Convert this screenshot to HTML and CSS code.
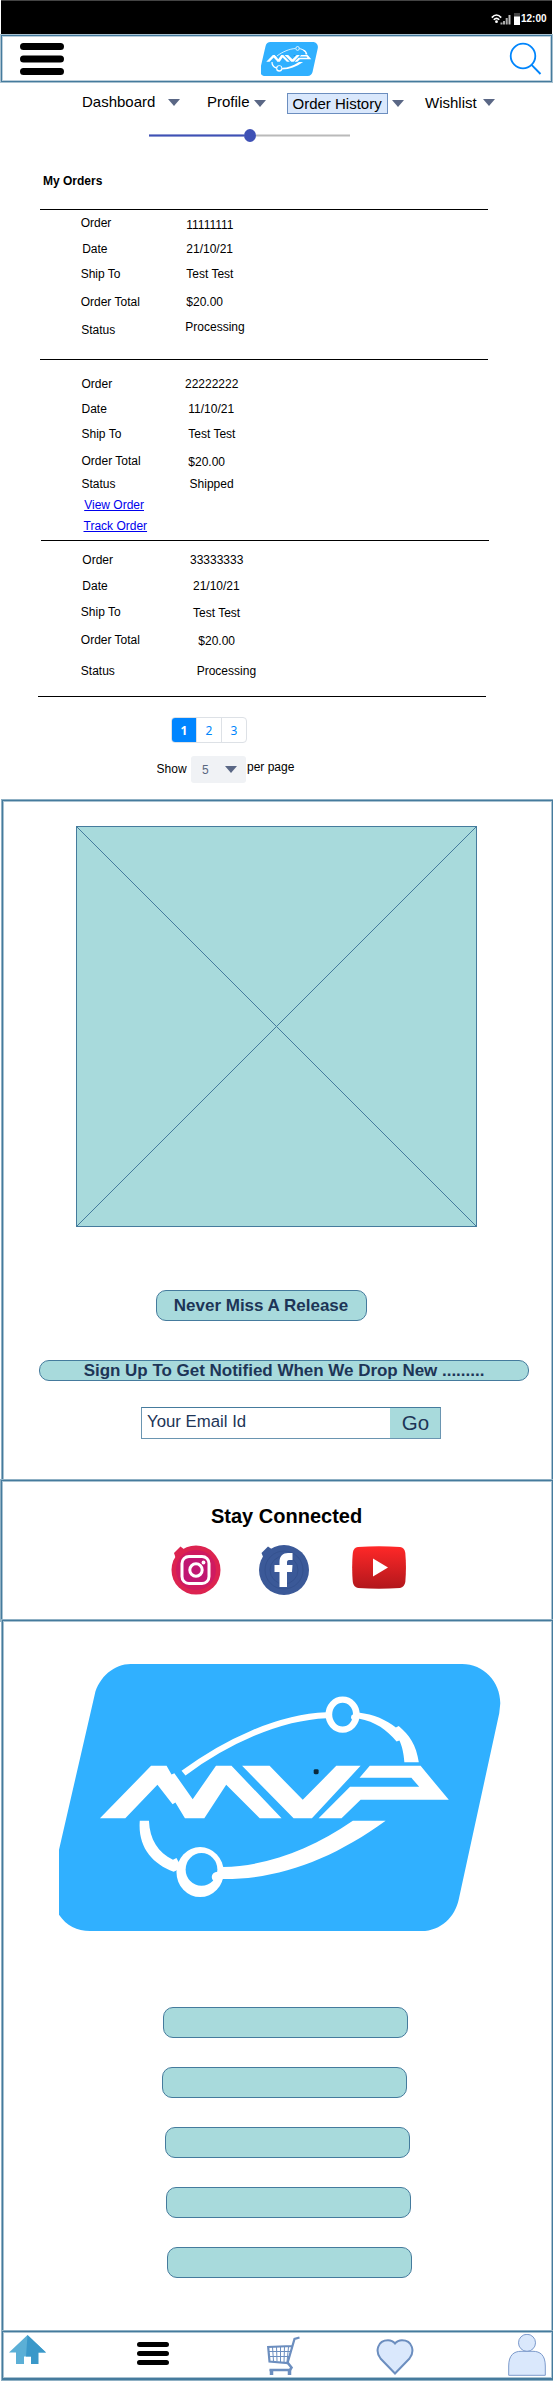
FILE: index.html
```html
<!DOCTYPE html>
<html lang="en">
<head>
<meta charset="utf-8">
<title>My Orders</title>
<link rel="stylesheet" href="styles.css">
</head>
<body>
<svg class="defs" width="0" height="0">
  <symbol id="mvp" viewBox="167 102 1253 802" preserveAspectRatio="none">
    <path fill="#30b0ff" d="M370 102H1310C1370 102 1418 155 1418 220L1415 250L1300 810C1290 860 1250 904 1195 904H255C218 904 188 888 167 855V660L268 195C280 140 325 102 370 102Z"/>
    <path fill="#fff" d="M283 565L428 408H472L486 434L494 430L546 508L612 408H656L798 565H736L641 465L579 565H524L497 518L489 523L446 465L355 565ZM686 408H764L858 510L953 408H1022L884 565H832ZM1048 408H1192L1272 510H1022L968 565H903L992 471H1188L1166 444H1019Z"/>
    <path fill="none" stroke="#fff" stroke-width="18" d="M520 430C640 335 790 262 925 256"/>
    <path fill="#fff" d="M1016 248C1060 254 1095 270 1122 293L1130 288C1160 315 1180 345 1187 397H1146C1144 370 1140 350 1132 332L1124 335C1096 300 1065 276 1016 266ZM396 573H422C424 630 448 668 490 690L500 685L515 715L492 726C430 702 390 650 396 573ZM632 712C760 708 880 660 1000 573H1093C940 690 790 750 628 748Z"/>
    <ellipse cx="971" cy="254" rx="39" ry="45" fill="#30b0ff" stroke="#fff" stroke-width="19"/>
    <ellipse cx="567" cy="727" rx="67" ry="75" fill="#fff"/>
    <ellipse cx="571" cy="719" rx="45" ry="49" fill="#30b0ff"/>
    <circle cx="1004" cy="262" r="9" fill="#fff"/><circle cx="616" cy="742" r="16" fill="#fff"/>
    <rect x="889" y="418" width="14" height="15" rx="4" fill="#0b2a3d"/>
  </symbol>
  <symbol id="bars" viewBox="0 0 44 32" preserveAspectRatio="none">
    <path d="M3.5 3.5H40.5M3.5 16H40.5M3.5 28.5H40.5" stroke="#000" stroke-width="7" stroke-linecap="round"/>
  </symbol>
  <symbol id="caret" viewBox="0 0 12 7"><path d="M0 0H12L6 7Z" fill="#5a6785"/></symbol>
</svg>

<div class="status">
  <svg class="status-icons" viewBox="0 0 30 13">
    <path d="M.8 4.600Q5.500-.6 10.200 4.600M2.800 6.800Q5.500 3.800 8.200 6.800" fill="none" stroke="#fff" stroke-width="1.700"/>
    <circle cx="5.500" cy="8.700" r="1.400" fill="#fff"/>
    <path d="M9.500 11.500V9.500h2v2zM12 11.500V8h2v3.500zM14.700 11.500V5h2v6.500z" fill="#aaa"/><path d="M17.500 11.500V2h2v9.500z" fill="#bbb"/>
    <path d="M23 0h6v4h-6z" fill="#444"/><path d="M23 3.500h6v8.500h-6z" fill="#fff"/>
  </svg><span>12:00</span>
</div>
<header class="header">
  <svg class="menu"><use href="#bars"/></svg>
  <svg class="logo"><use href="#mvp"/></svg>
  <svg class="search" viewBox="0 0 33 33"><circle cx="14" cy="14" r="12.300" fill="none" stroke="#0085fc" stroke-width="1.800"/><path d="M22.600 22.800L31.500 32" stroke="#0085fc" stroke-width="1.900"/></svg>
</header>
<nav class="tabs">
  <span class="t1">Dashboard</span><svg class="caret c1"><use href="#caret"/></svg>
  <span class="t2">Profile</span><svg class="caret c2"><use href="#caret"/></svg>
  <span class="t3">Order History</span><svg class="caret c3"><use href="#caret"/></svg>
  <span class="t4">Wishlist</span><svg class="caret c4"><use href="#caret"/></svg>
</nav>
<div class="slider"><i class="fill"></i><i class="knob"></i><i class="rest"></i></div>

<main class="orders">
  <h1>My Orders</h1>
  <section class="order o1">
    <div class="labels"><p>Order</p><p>Date</p><p>Ship To</p><p>Order Total</p><p>Status</p></div>
    <div class="values"><p>11111111</p><p>21/10/21</p><p>Test Test</p><p>$20.00</p><p>Processing</p></div>
  </section>
  <section class="order o2">
    <div class="labels"><p>Order</p><p>Date</p><p>Ship To</p><p>Order Total</p><p>Status</p><p><a href="#">View Order</a></p><p><a href="#">Track Order</a></p></div>
    <div class="values"><p>22222222</p><p>11/10/21</p><p>Test Test</p><p>$20.00</p><p>Shipped</p></div>
  </section>
  <section class="order o3">
    <div class="labels"><p>Order</p><p>Date</p><p>Ship To</p><p>Order Total</p><p>Status</p></div>
    <div class="values"><p>33333333</p><p>21/10/21</p><p>Test Test</p><p>$20.00</p><p>Processing</p></div>
  </section>
  <div class="end"></div>
  <div class="pages"><b>1</b><span>2</span><span>3</span></div>
  <div class="perpage"><span class="show">Show</span><div class="select"><span>5</span><svg class="caret"><use href="#caret"/></svg></div><span class="pp">per page</span></div>
</main>

<section class="panel signup">
  <svg class="placeholder" viewBox="0 0 401 401"><rect x=".5" y=".5" width="400" height="400"/><path d="M.5 .5L400.500 400.500M400.500 .5L.5 400.500"/></svg>
  <div class="pill release">Never Miss A Release</div>
  <div class="pill notify">Sign Up To Get Notified When We Drop New .........</div>
  <div class="email"><span>Your Email Id</span><b>Go</b></div>
</section>
<section class="panel social">
  <h2>Stay Connected</h2>
  <div class="icons">
    <svg class="ig" viewBox="0 0 50 50">
      <path fill="#dc2350" d="M3 8L9.500 1.500L14 5L5 14Z"/><circle cx="25" cy="25" r="24.500" fill="#dc2350"/><circle cx="25" cy="25" r="20" fill="#cf1a60"/>
      <rect x="11" y="11.500" width="27" height="27" rx="7" fill="#c01672" stroke="#fff" stroke-width="3"/><circle cx="25" cy="25" r="6.200" fill="none" stroke="#fff" stroke-width="3"/><circle cx="32.500" cy="17.500" r="1.900" fill="#fff"/>
    </svg>
    <svg class="fb" viewBox="0 0 50 50">
      <path fill="#3b5998" d="M2.500 8L9 1.500L14 5L5 14Z"/><circle cx="25" cy="25" r="25" fill="#3b5998"/>
      <circle cx="25" cy="25" r="19" fill="none" stroke="#324f8c" stroke-width=".8"/><circle cx="25" cy="25" r="14" fill="none" stroke="#324f8c" stroke-width=".8"/>
      <path fill="#fff" d="M20.500 42V27H15.500V20H20.500V17C20.500 11 24 8 29 8H33.500V15H30C28.500 15 28 16 28 17.500V20H33.500L33 27H28V42Z"/>
    </svg>
    <svg class="yt" viewBox="0 0 54 43">
      <defs><linearGradient id="red" x2="0" y2="1"><stop stop-color="#ff2828"/><stop offset="1" stop-color="#b2171c"/></linearGradient></defs>
      <path fill="url(#red)" d="M6 1Q27-.5 48 1Q52.500 1.500 53.300 7Q54.600 21 53.300 36Q52.500 41 48 42Q27 43.500 6 42Q1.500 41 .8 36Q-.5 21 .8 7Q1.500 1.500 6 1Z"/><path fill="#fff" d="M21 12.500L36 21.500L21 30.500Z"/>
    </svg>
  </div>
</section>
<section class="panel footer">
  <svg class="biglogo"><use href="#mvp"/></svg>
  <div class="link l1"></div><div class="link l2"></div><div class="link l3"></div><div class="link l4"></div><div class="link l5"></div>
</section>
<nav class="bottom">
  <svg class="home" viewBox="0 0 37 29"><path fill="#5bafd6" d="M18.500 0L0 17.500H7V29H15V21.500H22V29H29V17.500H37Z"/><path fill="#3a98c9" d="M18.500 0L17 21.500H22V29H29.500V17.500H37Z"/></svg>
  <svg class="menu2"><use href="#bars"/></svg>
  <svg class="cart" viewBox="0 0 33 40" fill="none" stroke="#6c8ebf">
    <path stroke-width="1" d="M5.500 11L6.500 25M9.500 11L10 25M13.500 11V26M17.500 11L17 26M21.500 11L20 26M2 15.500H24M2 20.500H23"/>
    <path stroke-width="2.200" d="M32.500 1.500L27.500 3L20.500 27L2.500 25.500L1.200 11L25 10"/><path stroke-width="2.600" d="M20.500 26.500L24.500 31.500L23 34H2.500"/><path stroke-width="3.500" d="M4.500 33.500V39M22.500 33.500V39"/>
  </svg>
  <svg class="heart" viewBox="0 0 38 36"><path d="M19 34.500L4.500 19.500C-1 12.500 1.500 1.200 12 1.200Q16.500 1.200 19 4.500Q21.500 1.200 26 1.200C36.500 1.200 39 12.500 33.500 19.500Z" fill="#dae8fc" stroke="#6c8ebf" stroke-width="2"/></svg>
  <svg class="person" viewBox="0 0 38 42" fill="#dae8fc" stroke="#7c9acb"><path d="M.7 41.300V32C.7 21 6 17.300 13 17.300H25C32 17.300 37.300 21 37.300 32V41.300Z"/><circle cx="19" cy="8.800" r="8.500"/></svg>
</nav>
</body>
</html>
```
FILE: styles.css
```css
* { box-sizing: border-box; margin: 0; padding: 0; }
body { width: 553px; height: 2382px; overflow: hidden; background: #fff; font: 12px/14px "Liberation Sans", Arial, sans-serif; color: #000; display: flex; flex-direction: column; }
svg { display: block; flex: none; }
.defs { position: absolute; }
.status { height: 35px; margin: 0 1px; background: #000; border-top: 1px solid #444; color: #fff; font-size: 10px; font-weight: bold; display: flex; padding-left: 490px; align-items: flex-start; }
.status-icons { width: 30px; height: 13px; margin-top: 12px; }
.status span { margin: 11px 0 0 0; line-height: 13px; }
.header { height: 47px; margin: 0 1px; border: 1px solid #457b9d; box-shadow: 0 0 0 1px #a8c1d0, inset 0 0 0 1px #bccfdb; display: flex; align-items: flex-start; }
.menu { width: 44px; height: 32px; margin: 7px 0 0 18px; }
.logo { width: 57px; height: 34px; margin: 6px 0 0 197px; }
.search { width: 33px; height: 33px; margin: 6px 0 0 191px; }
.tabs { height: 32px; display: flex; align-items: flex-start; font-size: 15px; line-height: 18px; white-space: nowrap; }
.tabs span { flex: none; }
.caret { width: 12px; height: 7px; }
.t1 { width: 86px; margin: 11px 0 0 82px; }
.c1 { margin-top: 17px; }
.t2 { width: 47px; margin: 11px 0 0 27px; }
.c2 { margin-top: 18px; }
.t3 { width: 101px; height: 21px; margin: 11px 0 0 21px; padding-left: 4.500px; line-height: 20px; background: #dae8fc; border: 1px solid #6c8ebf; }
.c3 { margin: 18px 0 0 4px; }
.t4 { width: 58px; margin: 12px 0 0 21px; }
.c4 { margin: 17px 0 0 0; }
.slider { height: 13px; margin: 15px 0 0 149px; width: 201px; display: flex; align-items: center; }
.fill { width: 95px; height: 3px; background: #3f51b5; border: solid #8e99d2; border-width: 1px 0; }
.knob { width: 12px; height: 13px; border-radius: 50%; background: #3f51b5; }
.rest { width: 94px; height: 3px; background: #bababa; border: solid #dcdcdc; border-width: 1px 0; }
.orders { height: 658px; }
h1 { font-size: 12px; line-height: 14px; margin: 32px 0 21px 43px; }
.order { display: flex; margin-left: 40px; width: 448px; border-top: 1px solid #000; }
.order p { height: 14px; white-space: nowrap; }
.labels { width: 145px; }
.o1 { height: 150px; }
.o1 .labels { padding: 6px 0 0 40.700px; }
.o1 .labels p:nth-child(2) { margin: 12px 0 0 1.500px; }
.o1 .labels p:nth-child(3) { margin-top: 11px; }
.o1 .labels p:nth-child(4) { margin-top: 14px; }
.o1 .labels p:nth-child(5) { margin: 14px 0 0 .5px; }
.o1 .values { padding: 8px 0 0 1.300px; }
.o1 .values p:nth-child(2) { margin-top: 10px; }
.o1 .values p:nth-child(3) { margin-top: 11px; }
.o1 .values p:nth-child(4) { margin-top: 14px; }
.o1 .values p:nth-child(5) { margin: 11px 0 0 -1px; }
.o2 { height: 181px; }
.o2 .labels { padding: 17px 0 0 41.500px; }
.o2 p:nth-child(2), .o2 p:nth-child(3) { margin-top: 11px; }
.o2 .labels p:nth-child(4) { margin-top: 13px; }
.o2 .labels p:nth-child(5) { margin-top: 9px; }
.o2 .labels p:nth-child(6) { margin: 7px 0 0 2.700px; }
.o2 .labels p:nth-child(7) { margin: 7px 0 0 2px; }
.o2 .values { padding: 17px 0 0 0; }
.o2 .values p:nth-child(n+2) { margin-left: 3.300px; }
.o2 .values p:nth-child(4) { margin-top: 14px; }
.o2 .values p:nth-child(5) { margin: 8px 0 0 4.600px; }
a { color: #0000ee; }
.o3 { margin-left: 41px; height: 156px; }
.o3 .labels { padding: 12px 0 0 41.300px; }
.o3 .labels p:nth-child(2) { margin-top: 12px; }
.o3 .labels p:nth-child(3) { margin: 12px 0 0 -1.500px; }
.o3 .labels p:nth-child(4) { margin: 14px 0 0 -1.500px; }
.o3 .labels p:nth-child(5) { margin: 17px 0 0 -1.500px; }
.o3 .values { padding: 12px 0 0 4px; }
.o3 .values p:nth-child(2) { margin: 12px 0 0 3px; }
.o3 .values p:nth-child(3) { margin: 13px 0 0 3px; }
.o3 .values p:nth-child(4) { margin: 14px 0 0 8.300px; }
.o3 .values p:nth-child(5) { margin: 16px 0 0 6.700px; }
.end { width: 448px; height: 1px; margin-left: 38px; background: #000; }
.pages { display: flex; width: 76px; height: 26px; margin: 20px 0 0 171px; border: 1px solid #dde1e6; border-radius: 4px; overflow: hidden; color: #0085fc; font: 12px/25px "Noto Sans", "Open Sans", sans-serif; text-align: center; }
.pages b { width: 24px; background: #0085ff; color: #fff; }
.pages span { width: 25px; border-left: 1px solid #dde1e6; }
.perpage { display: flex; margin: 13px 0 0 156px; height: 27px; align-items: flex-start; }
.show { width: 35px; margin-top: 6px; padding-left: .6px; }
.select { width: 55px; height: 27px; border-radius: 3px; background: #f0f2f5; color: #596780; display: flex; padding-left: 11px; }
.select span { width: 23px; margin-top: 7px; }
.select .caret { margin-top: 10px; }
.pp { margin: 4px 0 0 1px; }
.panel { width: 551px; margin-left: 2px; border: 1px solid #457b9d; box-shadow: 0 0 0 1px #8fb0c4, inset 0 0 0 1px #a9c2d1; display: flex; flex-direction: column; flex: none; color: #1d3557; }
.signup { height: 681px; }
.placeholder { width: 401px; height: 401px; margin: 25px 0 0 73px; fill: #a8dadc; stroke: #457b9d; stroke-width: 1; }
.pill { background: #a8dadc; border: 1px solid #457b9d; border-radius: 10px; font-weight: bold; font-size: 17px; text-align: center; white-space: nowrap; }
.release { width: 211px; height: 31px; margin: 63px 0 0 153px; line-height: 29px; padding-right: 1px; }
.notify { width: 490px; height: 21px; margin: 39px 0 0 36px; line-height: 19px; letter-spacing: -.02px; }
.email { width: 300px; height: 32px; margin: 26px 0 0 138px; border: 1px solid #6a95b1; border-top-color: #457b9d; display: flex; }
.email span { flex: 1; font-size: 16.800px; line-height: 27px; padding-left: 5px; }
.email b { width: 50px; background: #a8dadc; font-weight: normal; font-size: 20.500px; line-height: 30px; text-align: center; padding-left: 1px; }
.social { height: 141px; margin: -1px 0 0 1px; width: 552px; }
h2 { color: #000; font-size: 20px; line-height: 24px; margin: 23px 0 0 209px; }
.icons { display: flex; margin: 17px 0 0 169px; }
.ig { width: 50px; height: 50px; }
.fb { width: 50px; height: 50px; margin-left: 38px; }
.yt { width: 54px; height: 43px; margin: 1px 0 0 43px; }
.footer { height: 712px; margin-top: -1px; }
.biglogo { width: 442px; height: 267px; margin: 43px 0 76px 56px; }
.link { width: 245px; height: 31px; margin-bottom: 29px; border: 1px solid #457b9d; border-radius: 10px; background: #a8dadc; }
.l1 { margin-left: 160px; }
.l2 { margin-left: 159px; }
.l3 { margin-left: 162px; }
.l4 { margin-left: 163px; }
.l5 { margin-left: 164px; }
.bottom { height: 49px; width: 551px; margin: -1px 0 0 2px; flex: none; border: 1px solid #457b9d; border-bottom: 2px solid #457b9d; box-shadow: 0 0 0 1px #8fb0c4, inset 0 0 0 1px #a9c2d1; display: flex; align-items: flex-start; }
.home { width: 37px; height: 29px; margin: 3px 0 0 6px; }
.menu2 { width: 32px; height: 23px; margin: 10px 0 0 91px; }
.cart { width: 33px; height: 40px; margin: 4px 0 0 98px; }
.heart { width: 38px; height: 36px; margin: 7px 0 0 76px; }
.person { width: 38px; height: 42px; margin: 2px 0 0 94px; }
```
